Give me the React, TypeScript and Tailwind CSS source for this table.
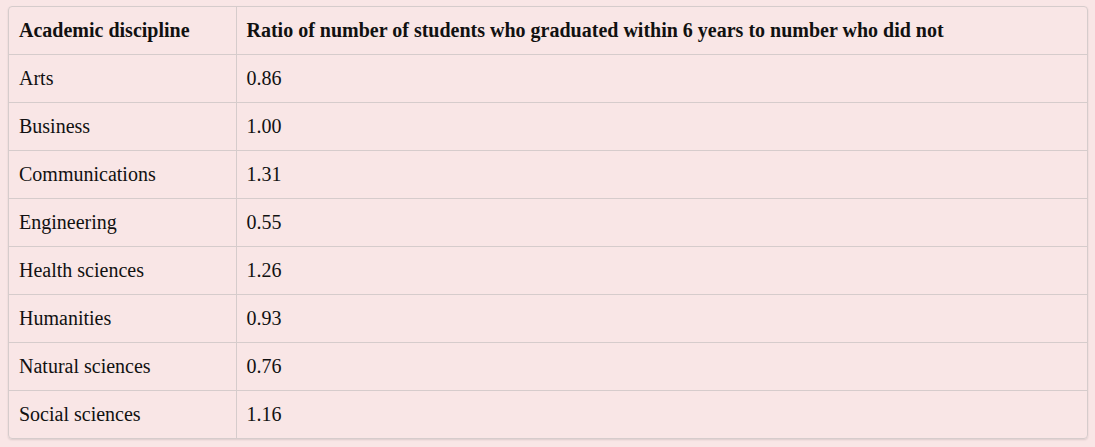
const rows: [string, string][] = [
  ['Arts', '0.86'],
  ['Business', '1.00'],
  ['Communications', '1.31'],
  ['Engineering', '0.55'],
  ['Health sciences', '1.26'],
  ['Humanities', '0.93'],
  ['Natural sciences', '0.76'],
  ['Social sciences', '1.16'],
]

export default function App() {
  return (
    <div className="h-[447px] w-[1095px] bg-[#f9e6e6] pl-2 pt-[6px] font-['Liberation_Serif',serif] text-[20px] leading-[24px] text-[#111]">
      <div className="w-[1080px] overflow-hidden rounded-[4px] border border-[#d6cccc] shadow-[0_1px_2px_rgba(0,0,0,0.12)]">
        <table className="w-full table-fixed border-collapse">
          <thead>
            <tr className="h-[47px]">
              <th className="w-[227px] border-r border-[#d6cccc] px-[10px] text-left font-bold">Academic discipline</th>
              <th className="px-[10px] text-left font-bold">
                Ratio of number of students who graduated within 6 years to number who did not
              </th>
            </tr>
          </thead>
          <tbody>
            {rows.map(([name, ratio]) => (
              <tr key={name} className="h-[48px] border-t border-[#d6cccc]">
                <td className="border-r border-[#d6cccc] px-[10px]">{name}</td>
                <td className="px-[10px]">{ratio}</td>
              </tr>
            ))}
          </tbody>
        </table>
      </div>
    </div>
  )
}
